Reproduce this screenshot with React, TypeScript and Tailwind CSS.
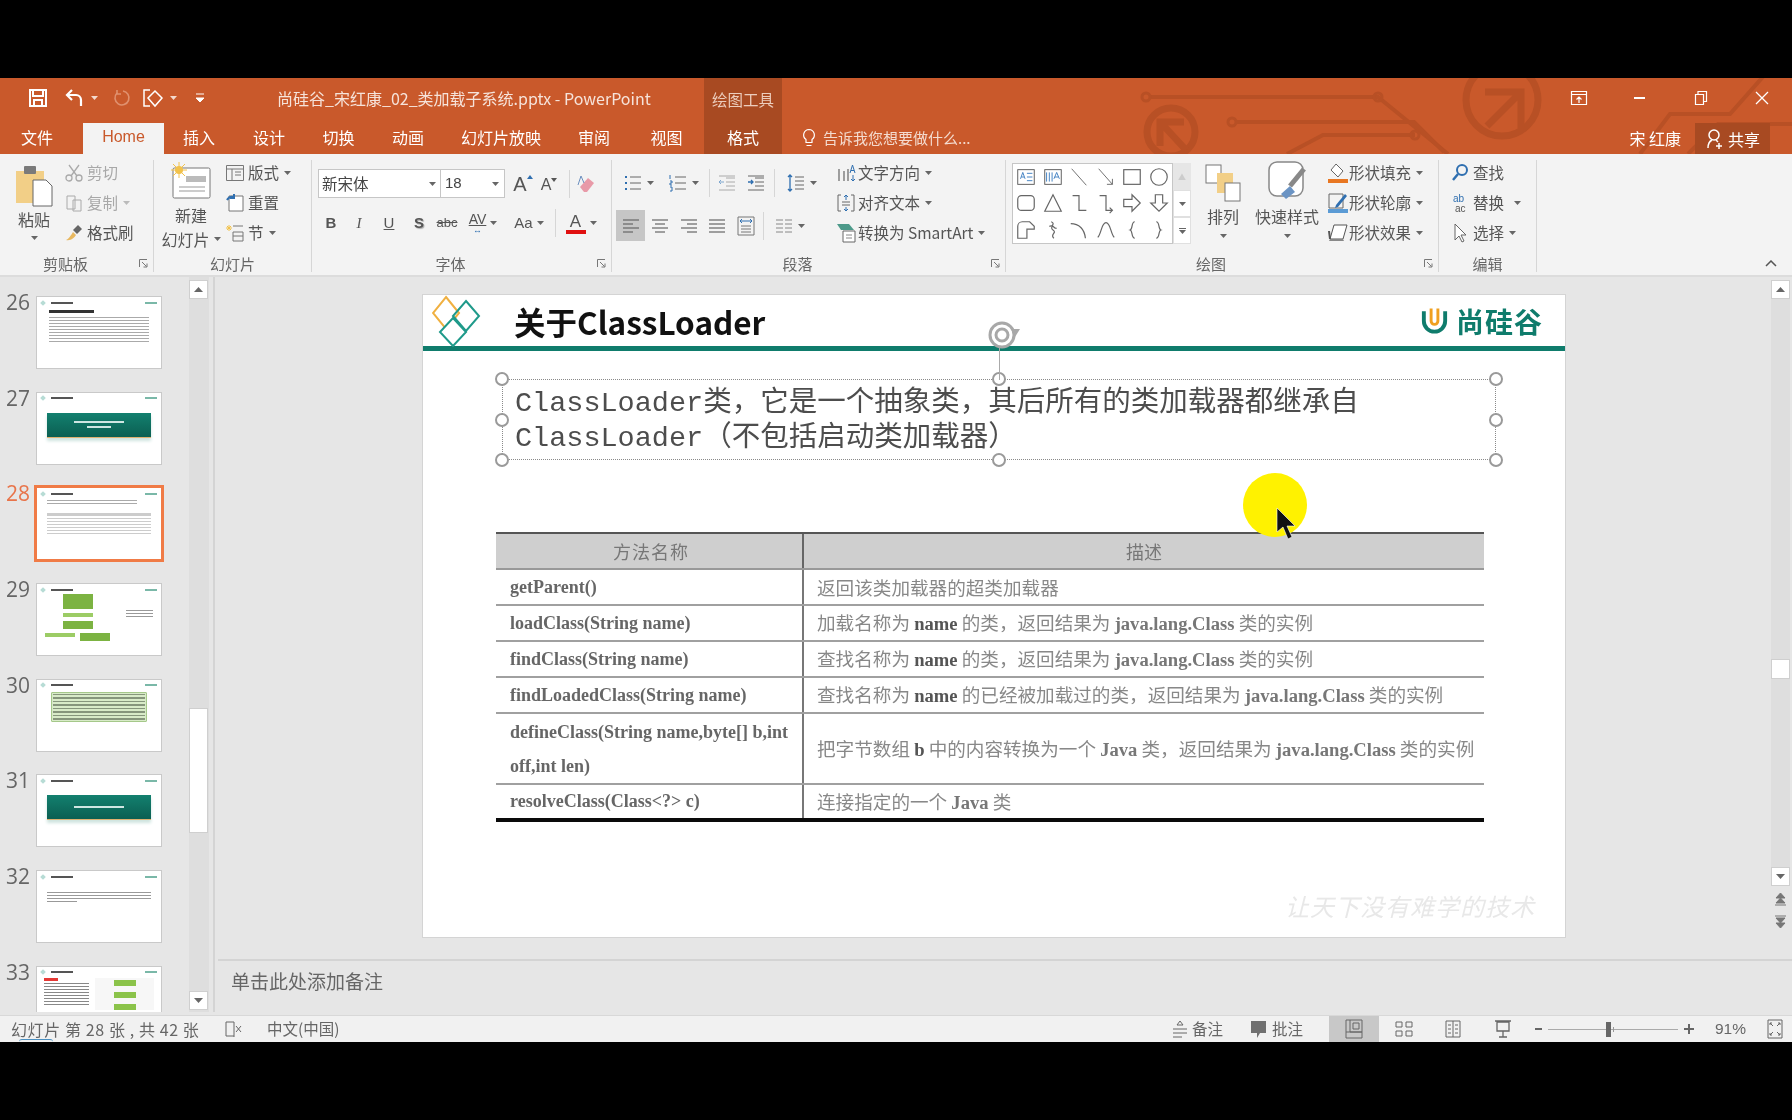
import React from "react";

const cjk = "font-['Noto_Sans_CJK_SC','Liberation_Sans',sans-serif]";

function Caret({ color = "#666" }: { color?: string }) {
  return (
    <svg width="7" height="4" viewBox="0 0 7 4" className="shrink-0">
      <path d="M0 0h7L3.5 4z" fill={color} />
    </svg>
  );
}

function Ico({ w = 20, h = 20, vb = "0 0 20 20", children }: { w?: number; h?: number; vb?: string; children: React.ReactNode }) {
  return (
    <svg width={w} height={h} viewBox={vb} fill="none" className="shrink-0">
      {children}
    </svg>
  );
}

// one row of the small ribbon buttons
function SmallBtn({
  icon,
  label,
  caret,
  gray,
  gap = 4,
}: {
  icon: React.ReactNode;
  label: string;
  caret?: boolean;
  gray?: boolean;
  gap?: number;
}) {
  return (
    <div className="flex h-[26px] items-center">
      <div className="flex w-[22px] justify-center">{icon}</div>
      <span
        className={`text-[15.5px] leading-none whitespace-nowrap ${gray ? "text-[#a8a8a8]" : "text-[#555]"}`}
        style={{ marginLeft: gap - 2 }}
      >
        {label}
      </span>
      {caret && (
        <span className="ml-[5px]">
          <Caret color={gray ? "#bbb" : "#666"} />
        </span>
      )}
    </div>
  );
}

function Launcher() {
  return (
    <svg width="9" height="9" viewBox="0 0 9 9" className="shrink-0">
      <path d="M.5 8V.5H8M3 3l4.5 4.5M8 4.5V8H4.5" stroke="#777" fill="none" />
    </svg>
  );
}

function Group({
  w,
  label,
  launcher,
  children,
}: {
  w: number;
  label: string;
  launcher?: boolean;
  children: React.ReactNode;
}) {
  return (
    <div className="flex h-[112px] shrink-0 flex-col border-r border-[#d6d6d6]" style={{ width: w }}>
      <div className="flex h-[86px]">{children}</div>
      <div className={`flex h-[26px] items-center pt-[8px] pr-[5px] ${launcher ? "" : "pl-[14px]"}`}>
        <span className={`flex-1 text-center text-[15px] leading-none text-[#666] ${launcher ? "mr-[8px]" : ""}`}>{label}</span>
        {launcher ? <Launcher /> : <span className="w-[9px]" />}
      </div>
    </div>
  );
}

function TextBtn({ w, children, caret }: { w: number; children: React.ReactNode; caret?: boolean }) {
  return (
    <div className="flex h-[30px] items-center justify-center gap-[4px]" style={{ width: w }}>
      {children}
      {caret && <Caret />}
    </div>
  );
}

const VDiv = () => <div className="mx-[3px] h-[28px] w-px bg-[#d6d6d6]" />;

function AlignIcon({ kind }: { kind: "l" | "c" | "r" | "j" }) {
  const rows =
    kind === "l"
      ? ["M2 4h16", "M2 8h10", "M2 12h16", "M2 16h10"]
      : kind === "c"
      ? ["M2 4h16", "M5 8h10", "M2 12h16", "M5 16h10"]
      : kind === "r"
      ? ["M2 4h16", "M8 8h10", "M2 12h16", "M8 16h10"]
      : ["M2 4h16", "M2 8h16", "M2 12h16", "M2 16h16"];
  return (
    <Ico>
      {rows.map((d) => (
        <path key={d} d={d} stroke="#666" strokeWidth="1.2" />
      ))}
    </Ico>
  );
}

const shapes: React.ReactNode[] = [
  <>
    <rect x="3" y="4" width="18" height="16" stroke="#555" />
    <path d="M6 14l2.5-7 2.5 7M7 12h3M13 8h6M13 12h6M13 16h6" stroke="#3a7cc0" />
  </>,
  <>
    <rect x="3" y="4" width="18" height="16" stroke="#555" />
    <path d="M5 7v10M8 7v10M11 7v10M13 14l3-7 3 7M14 12h4" stroke="#3a7cc0" />
  </>,
  <path d="M4 3l16 18" stroke="#666" />,
  <path d="M4 3l15 17M19 14v6h-6" stroke="#666" />,
  <rect x="3" y="4" width="18" height="16" stroke="#666" strokeWidth="1.3" />,
  <ellipse cx="12" cy="12" rx="9" ry="9" stroke="#666" strokeWidth="1.3" />,
  <rect x="3" y="4" width="18" height="16" rx="4" stroke="#666" strokeWidth="1.3" />,
  <path d="M12 3L3 21h18z" stroke="#666" strokeWidth="1.3" />,
  <path d="M5 4h7v16h8" stroke="#666" strokeWidth="1.3" />,
  <path d="M5 4h7v16h6M16 17l3 3-3 3" stroke="#666" strokeWidth="1.3" />,
  <path d="M3 8h9V3l9 9-9 9v-5H3z" stroke="#666" strokeWidth="1.3" />,
  <path d="M8 3h8v9h5l-9 9-9-9h5z" stroke="#666" strokeWidth="1.3" />,
  <path d="M3 21V8a5 5 0 015-5h8l5 5v3h-8v10z" stroke="#666" strokeWidth="1.3" />,
  <path d="M10 3c6 2-3 6 2 9 5 3-4 5 1 9M8 8c5-2 5 3 8 2" stroke="#666" strokeWidth="1.3" />,
  <path d="M3 5c9 0 15 6 16 16" stroke="#666" strokeWidth="1.3" />,
  <path d="M3 20C7 16 7 4 12 4s5 12 9 16" stroke="#666" strokeWidth="1.3" />,
  <path d="M15 3c-4 0-2 8-5 9 3 1 1 9 5 9" stroke="#666" strokeWidth="1.3" />,
  <path d="M9 3c4 0 2 8 5 9-3 1-1 9-5 9" stroke="#666" strokeWidth="1.3" />,
];

function TitleBar() {
  return (
    <div className="relative h-[76px] shrink-0 bg-[#c9592b] text-white">
      <svg className="absolute inset-0" width="1792" height="76" viewBox="0 78 1792 76" fill="none" stroke="#b85025" strokeWidth="5">
        <path d="M1150 97h228l70 57" strokeWidth="4" />
        <circle cx="1146" cy="97" r="4" strokeWidth="3" />
        <circle cx="1378" cy="97" r="4" strokeWidth="3" />
        <circle cx="1232" cy="122" r="4" strokeWidth="3" />
        <path d="M1236 122h178l30 30M1415 135h-92l-36 19" strokeWidth="4" />
        <circle cx="1415" cy="135" r="4" strokeWidth="3" />
        <circle cx="1171" cy="132" r="24" strokeWidth="7" />
        <path d="M1160 146v-24h24M1162 124l24 26" strokeWidth="7" />
        <circle cx="1502" cy="100" r="36" strokeWidth="7" />
        <path d="M1485 92h36v36M1519 94l-32 32" strokeWidth="7" />
        <path d="M1640 154l30-40h60l62-70M1688 154l30-30h74" strokeWidth="4" />
      </svg>

      <div className="relative flex h-[45px]">
        <div className="flex w-[277px] items-center pb-[6px]">
          <div className="ml-[27px] w-[22px]">
            <Ico w={22} h={22} vb="0 0 22 22">
              <path d="M3 3h16v16H3z M6 3v6h10V3 M7 19v-6h8v6" stroke="#fff" strokeWidth="2" />
            </Ico>
          </div>
          <div className="ml-[15px] flex items-center gap-[5px]">
            <Ico w={22} h={22} vb="0 0 22 22">
              <path d="M8 3L3 8l5 5M3 8h9a5 5 0 015 5v6" stroke="#fff" strokeWidth="2.2" />
            </Ico>
            <Caret color="#f4d9cc" />
          </div>
          <div className="ml-[13px]">
            <Ico w={20} h={20}>
              <path d="M12 3a7 7 0 11-6 2M6 2v4h4" stroke="#e0916f" strokeWidth="1.6" />
            </Ico>
          </div>
          <div className="ml-[10px] flex items-center gap-[5px]">
            <Ico w={24} h={22} vb="0 0 24 22">
              <path d="M9 3H3v16h6M14 4l7 7-7 8-7-8z" stroke="#fff" strokeWidth="1.5" />
            </Ico>
            <Caret color="#f4d9cc" />
          </div>
          <div className="ml-[19px]">
            <Ico w={8} h={10} vb="0 0 8 10">
              <path d="M0 1h8M0 5h8l-4 4z" stroke="#fff" fill="#fff" />
            </Ico>
          </div>
        </div>
        <div className="w-[427px] pt-[11px] text-[16px] leading-[18px] whitespace-nowrap text-[#f6e3da]">
          尚硅谷_宋红康_02_类加载子系统.pptx - PowerPoint
        </div>
        <div className="flex w-[78px] justify-center bg-[#a84a22] pt-[12px] text-[15.5px] leading-[18px] text-[#eccdbd]">绘图工具</div>
        <div className="flex-1" />
        <div className="flex w-[244px] pb-[6px]">
          <div className="flex w-[61px] items-center justify-center">
            <Ico w={18} h={18} vb="0 0 18 18">
              <path d="M1.5 2.5h15v13h-15zM1.5 5.5h15M9 14V8M6.5 10.5L9 8l2.5 2.5" stroke="#fff" strokeWidth="1.2" />
            </Ico>
          </div>
          <div className="flex w-[61px] items-center justify-center">
            <div className="h-[2px] w-[11px] bg-white" />
          </div>
          <div className="flex w-[61px] items-center justify-center">
            <Ico w={14} h={16} vb="0 0 14 16">
              <path d="M1.5 4.5h8v10h-8zM4 4.5V1.5h8.5v10h-3" stroke="#fff" strokeWidth="1.2" />
            </Ico>
          </div>
          <div className="flex w-[61px] items-center justify-center">
            <Ico w={14} h={14} vb="0 0 14 14">
              <path d="M1 1l12 12M13 1L1 13" stroke="#fff" strokeWidth="1.3" />
            </Ico>
          </div>
        </div>
      </div>

      <div className="relative flex h-[31px] text-[16px] leading-none">
        <div className="flex w-[83px] items-center justify-center pr-[9px] pb-[3px]">文件</div>
        <div className={"flex w-[81px] items-center justify-center bg-[#f3f3f3] pb-[3px] font-['Liberation_Sans',sans-serif] text-[#c9592b]"}>Home</div>
        {[
          ["插入", 70],
          ["设计", 70],
          ["切换", 69],
          ["动画", 70],
          ["幻灯片放映", 116],
          ["审阅", 70],
          ["视图", 75],
        ].map(([t, w]) => (
          <div key={t as string} className="flex items-center justify-center pb-[3px]" style={{ width: w as number }}>
            {t}
          </div>
        ))}
        <div className="flex w-[78px] items-center justify-center bg-[#a84a22] pb-[3px]">格式</div>
        <div className="ml-[19px] flex items-center gap-[6px] pb-[2px] text-[15px] text-[#f4dbcf]">
          <Ico w={16} h={20} vb="0 0 16 20">
            <path d="M8 1.5a5.5 5.5 0 00-3 10v3h6v-3a5.5 5.5 0 00-3-10zM5.5 17.5h5" stroke="#fff" strokeWidth="1.2" />
          </Ico>
          告诉我您想要做什么...
        </div>
        <div className="flex-1" />
        <div className="flex items-center pr-[14px] pb-[2px]">宋 红康</div>
        <div className="mr-[22px] flex w-[75px] items-center justify-center gap-[3px] bg-[#a84a22]">
          <Ico w={20} h={22} vb="0 0 20 22">
            <circle cx="9" cy="7" r="5" stroke="#fff" strokeWidth="1.5" />
            <path d="M3 20c0-5 2-7 4-8M11 12l2 2M14 15v6M11 18h6" stroke="#fff" strokeWidth="1.5" />
          </Ico>
          共享
        </div>
      </div>
    </div>
  );
}

function GrowFont({ size, down }: { size: number; down?: boolean }) {
  return (
    <div className="flex items-start font-['Liberation_Sans',sans-serif] leading-none text-[#555]" style={{ fontSize: size }}>
      A
      <svg width="6" height="4" viewBox="0 0 6 4" className="mt-[1px]">
        <path d={down ? "M0 0h6L3 4z" : "M0 4h6L3 0z"} fill={down ? "#555" : "#2f6fb0"} />
      </svg>
    </div>
  );
}

function Ribbon() {
  return (
    <div className="relative flex h-[123px] shrink-0 border-b-2 border-[#dcdcdc] bg-[#f3f3f3] pt-[6px]">
      <Group w={154} label="剪贴板" launcher>
        <div className="ml-[11px] flex w-[46px] flex-col items-center pt-[5px]">
          <Ico w={38} h={42} vb="0 0 38 42">
            <path d="M1 6h28v32H1z" fill="#f2cf87" />
            <rect x="9" y="1" width="12" height="8" rx="1" fill="#7a7a7a" />
            <path d="M18 15h13l6 6v20H18z" fill="#fff" stroke="#666" />
          </Ico>
          <span className="mt-[2px] text-[16px] leading-[20px] text-[#555]">粘贴</span>
          <span className="mt-[7px]">
            <Caret />
          </span>
        </div>
        <div className="ml-[6px] flex flex-col gap-[4px]">
          <SmallBtn
            gray
            label="剪切"
            icon={
              <Ico>
                <path d="M5 2l8 11M15 2L7 13" stroke="#aaa" strokeWidth="1.3" />
                <circle cx="5" cy="15" r="3" stroke="#aaa" strokeWidth="1.3" />
                <circle cx="15" cy="15" r="3" stroke="#aaa" strokeWidth="1.3" />
              </Ico>
            }
          />
          <SmallBtn
            gray
            caret
            label="复制"
            icon={
              <Ico>
                <path d="M3 3h8v13H3zM9 7h8v11H9z" stroke="#aaa" fill="#f3f3f3" />
              </Ico>
            }
          />
          <SmallBtn
            label="格式刷"
            icon={
              <Ico>
                <path d="M9 7l5-5 4 4-5 5z" fill="#666" />
                <path d="M2 17c3-1 5-5 7-8l3 3c-2 3-5 6-10 5z" fill="#e8b860" />
              </Ico>
            }
          />
        </div>
      </Group>

      <Group w={158} label="幻灯片">
        <div className="ml-[7px] flex w-[60px] flex-col items-center pt-[2px]">
          <Ico w={42} h={38} vb="0 0 42 38">
            <rect x="3" y="6" width="37" height="30" rx="1.5" fill="#fff" stroke="#777" />
            <path d="M16 14h20v6H16z" fill="#bbb" />
            <path d="M9 25h26M9 29h26" stroke="#999" />
            <circle cx="9" cy="8" r="4" fill="#f2c24b" />
            <path d="M9 0v16M1 8h16M3 2l12 12M15 2L3 14" stroke="#f2c24b" />
          </Ico>
          <span className="mt-[3px] text-[16px] leading-[24px] text-[#555]">新建</span>
          <div className="flex items-center gap-[4px] text-[16px] leading-[24px] whitespace-nowrap text-[#555]">
            幻灯片
            <Caret />
          </div>
        </div>
        <div className="ml-[3px] flex flex-col gap-[4px]">
          <SmallBtn
            caret
            label="版式"
            icon={
              <Ico>
                <path d="M1.5 2.5h17v15h-17zM1.5 6h17M7 6v11.5M10 9h6M10 12h6" stroke="#777" />
              </Ico>
            }
          />
          <SmallBtn
            label="重置"
            icon={
              <Ico>
                <path d="M4 3h14v15H4z" stroke="#777" fill="#fff" />
                <path d="M2 7a6 6 0 017-3M9 1v4H5" stroke="#2f6fb0" strokeWidth="2" />
              </Ico>
            }
          />
          <SmallBtn
            caret
            label="节"
            icon={
              <Ico>
                <path d="M8 3h10M8 9h10v9H8zM8 13h10" stroke="#777" />
                <path d="M1 5h6M4 2v6M2 3l4 4M6 3L2 7" stroke="#f2c24b" />
              </Ico>
            }
          />
        </div>
      </Group>

      <Group w={300} label="字体" launcher>
        <div className="ml-[6px] flex flex-col pt-[9px]">
          <div className="flex h-[29px] items-center">
            <div className="flex h-[29px] w-[123px] items-center justify-between border border-[#c6c6c6] bg-white pr-[4px] pl-[3px] text-[15.5px] text-[#444]">
              新宋体
              <Caret />
            </div>
            <div className="-ml-px flex h-[29px] w-[65px] items-center justify-between border border-[#c6c6c6] bg-white pr-[5px] pl-[4px] font-['Liberation_Sans',sans-serif] text-[15px] text-[#444]">
              18
              <Caret />
            </div>
            <div className="flex w-[30px] justify-center pl-[6px]">
              <GrowFont size={20} />
            </div>
            <div className="flex w-[28px] justify-center pt-[3px]">
              <GrowFont size={16} down />
            </div>
            <div className="mx-[6px] h-[28px] w-px bg-[#d6d6d6]" />
            <Ico w={22} h={22} vb="0 0 22 22">
              <path d="M4 14l8-9 6 5-7 9H8z" fill="#e89aa8" />
              <path d="M5 3l-3 9M5 3l3 7" stroke="#6b8fbf" />
            </Ico>
          </div>
          <div className="mt-[10px] flex h-[30px] items-center text-[15px] text-[#555]">
            <TextBtn w={26}>
              <b className="font-['Liberation_Sans',sans-serif]">B</b>
            </TextBtn>
            <TextBtn w={30}>
              <i className="font-['Liberation_Serif',serif]">I</i>
            </TextBtn>
            <TextBtn w={30}>
              <u className="font-['Liberation_Sans',sans-serif]">U</u>
            </TextBtn>
            <TextBtn w={30}>
              <b className="font-['Liberation_Sans',sans-serif] [text-shadow:1px_1px_1px_#aaa]">S</b>
            </TextBtn>
            <TextBtn w={26}>
              <span className="font-['Liberation_Sans',sans-serif] text-[13px] line-through">abc</span>
            </TextBtn>
            <TextBtn w={46} caret>
              <span className="flex flex-col items-center font-['Liberation_Sans',sans-serif] text-[14px] leading-[13px]">
                <span className="underline">AV</span>
                <span className="text-[9px] leading-[8px] text-[#2f6fb0]">↔</span>
              </span>
            </TextBtn>
            <TextBtn w={46} caret>
              <span className="font-['Liberation_Sans',sans-serif]">Aa</span>
            </TextBtn>
            <VDiv />
            <TextBtn w={44} caret>
              <span className="flex flex-col items-center font-['Liberation_Sans',sans-serif] text-[17px] leading-[17px]">
                A<span className="h-[4px] w-[20px] bg-[#e01010]" />
              </span>
            </TextBtn>
          </div>
        </div>
      </Group>

      <Group w={394} label="段落" launcher>
        <div className="flex w-[218px] flex-col pt-[8px] pl-[4px]">
          <div className="flex h-[30px] items-center">
            <TextBtn w={44} caret>
              <Ico>
                <path d="M7 4h11M7 10h11M7 16h11" stroke="#666" />
                <path d="M2 4h2M2 10h2M2 16h2" stroke="#2f6fb0" strokeWidth="2" />
              </Ico>
            </TextBtn>
            <TextBtn w={46} caret>
              <Ico>
                <path d="M7 4h11M7 10h11M7 16h11" stroke="#666" />
                <path d="M2 2v4M2 8h2v2H2v2h2M2 14h2v4H2" stroke="#2f6fb0" />
              </Ico>
            </TextBtn>
            <VDiv />
            <div className="flex w-[28px] justify-center">
              <Ico>
                <path d="M9 5h9M9 9h9M9 13h9M2 17h16M2 3h16" stroke="#aaa" />
                <path d="M7 9H2M4 7L2 9l2 2" stroke="#7fa8d0" />
              </Ico>
            </div>
            <div className="flex w-[30px] justify-center">
              <Ico>
                <path d="M9 5h9M9 9h9M9 13h9M2 17h16M2 3h16" stroke="#666" />
                <path d="M2 9h5M5 7l2 2-2 2" stroke="#2f6fb0" strokeWidth="1.3" />
              </Ico>
            </div>
            <VDiv />
            <TextBtn w={46} caret>
              <Ico>
                <path d="M9 4h9M9 8h9M9 12h9M9 16h9" stroke="#666" />
                <path d="M4 2v16M2 4l2-2 2 2M2 16l2 2 2-2" stroke="#2f6fb0" strokeWidth="1.3" />
              </Ico>
            </TextBtn>
          </div>
          <div className="mt-[12px] flex h-[31px] items-center">
            <div className="flex h-[31px] w-[29px] items-center justify-center bg-[#c6c6c6]">
              <AlignIcon kind="l" />
            </div>
            <div className="flex w-[29px] justify-center">
              <AlignIcon kind="c" />
            </div>
            <div className="flex w-[29px] justify-center">
              <AlignIcon kind="r" />
            </div>
            <div className="flex w-[28px] justify-center">
              <AlignIcon kind="j" />
            </div>
            <div className="flex w-[29px] justify-center">
              <Ico>
                <path d="M2 1h16v18H2z" stroke="#777" />
                <path d="M4 5h12M6 3L4 5l2 2M14 3l2 2-2 2" stroke="#2f6fb0" />
                <path d="M5 10h10M5 13h10M5 16h10" stroke="#777" />
              </Ico>
            </div>
            <VDiv />
            <TextBtn w={44} caret>
              <Ico>
                <path d="M2 4h7M11 4h7M2 8h7M11 8h7M2 12h7M11 12h7M2 16h7M11 16h7" stroke="#888" />
              </Ico>
            </TextBtn>
          </div>
        </div>
        <div className="ml-[5px] flex flex-col gap-[4px]">
          <SmallBtn
            caret
            label="文字方向"
            gap={3}
            icon={
              <Ico>
                <path d="M3 6v12M8 8v10M12 6v12" stroke="#666" strokeWidth="1.2" />
                <path d="M14 10l2.5-8 2.5 8M15 7.5h3M17 12v6M15 16l2 2 2-2" stroke="#2f6fb0" />
              </Ico>
            }
          />
          <SmallBtn
            caret
            label="对齐文本"
            gap={3}
            icon={
              <Ico>
                <path d="M5 2H2v16h3M15 2h3v16h-3M6 9h8M6 12h8" stroke="#666" />
                <path d="M10 2v5M8 4l2-2 2 2M10 18v-4M8 16l2 2 2-2" stroke="#2f6fb0" />
              </Ico>
            }
          />
          <SmallBtn
            caret
            label="转换为 SmartArt"
            gap={3}
            icon={
              <Ico>
                <path d="M1 1h12l5 6H5z" fill="#4d9a8a" />
                <path d="M7 8h12v11H7z" fill="#fff" stroke="#666" />
                <path d="M10 12h6M10 15h6" stroke="#888" />
              </Ico>
            }
          />
        </div>
      </Group>

      <Group w={433} label="绘图" launcher>
        <div className="mt-[3px] ml-[6px] flex h-[81px] shrink-0">
          <div className="grid w-[161px] grid-cols-6 border border-[#c6c6c6] bg-white">
            {shapes.map((s, i) => (
              <div key={i} className="flex items-center justify-center">
                <svg width="22" height="22" viewBox="0 0 24 24" fill="none">
                  {s}
                </svg>
              </div>
            ))}
          </div>
          <div className="flex w-[18px] flex-col">
            <div className="flex h-[27px] items-center justify-center bg-[#e6e6e6] text-[8px] text-[#ccc]">▲</div>
            <div className="flex h-[27px] items-center justify-center border border-[#e0e0e0] bg-white">
              <Caret />
            </div>
            <div className="flex h-[27px] flex-col items-center justify-center gap-[1px] border border-[#e0e0e0] bg-white">
              <div className="h-px w-[7px] bg-[#666]" />
              <Caret />
            </div>
          </div>
        </div>
        <div className="ml-[7px] flex w-[50px] flex-col items-center pt-[4px] text-[16px] leading-[20px] text-[#555]">
          <Ico w={36} h={38} vb="0 0 36 38">
            <rect x="1" y="1" width="15" height="18" fill="#fff" stroke="#777" />
            <rect x="12" y="9" width="16" height="20" fill="#f2cf87" />
            <rect x="20" y="19" width="15" height="18" fill="#fff" stroke="#777" />
          </Ico>
          <span className="mt-[4px]">排列</span>
          <span className="mt-[8px]">
            <Caret />
          </span>
        </div>
        <div className="ml-[1px] flex w-[76px] flex-col items-center pt-[1px] text-[16px] leading-[20px] text-[#555]">
          <Ico w={38} h={41} vb="0 0 38 41">
            <rect x="1" y="1" width="34" height="34" rx="8" fill="#fff" stroke="#888" strokeWidth="1.5" />
            <path d="M36 8L22 25" stroke="#888" strokeWidth="5" />
            <path d="M22 25l-9 8 5 5 9-7z" fill="#6b94c4" />
          </Ico>
          <span className="mt-[4px] whitespace-nowrap">快速样式</span>
          <span className="mt-[8px]">
            <Caret />
          </span>
        </div>
        <div className="ml-[2px] flex flex-col gap-[4px]">
          <SmallBtn
            caret
            label="形状填充"
            gap={2}
            icon={
              <Ico w={22} h={22} vb="0 0 22 22">
                <path d="M9 2l7 7-5 6-7-7z" fill="#fff" stroke="#666" />
                <path d="M1 17h20v4H1z" fill="#e87722" />
              </Ico>
            }
          />
          <SmallBtn
            caret
            label="形状轮廓"
            gap={2}
            icon={
              <Ico w={22} h={22} vb="0 0 22 22">
                <path d="M2 2h14v14H2z" stroke="#666" />
                <path d="M18 2L9 13l-1 3 3-1L20 4z" fill="#2f6fb0" />
                <path d="M1 17h20v4H1z" fill="#5b9bd5" />
              </Ico>
            }
          />
          <SmallBtn
            caret
            label="形状效果"
            gap={2}
            icon={
              <Ico w={22} h={22} vb="0 0 22 22">
                <path d="M7 3h13L16 17H3z" fill="#fff" stroke="#555" />
                <path d="M3 17h13l1 2H2z" fill="#888" />
                <path d="M2 9l1 8" stroke="#555" strokeWidth="2" />
              </Ico>
            }
          />
        </div>
      </Group>

      <Group w={98} label="编辑">
        <div className="ml-[10px] flex flex-col gap-[4px]">
          <SmallBtn
            label="查找"
            icon={
              <Ico>
                <circle cx="12" cy="7" r="5" stroke="#2f6fb0" strokeWidth="2" />
                <path d="M8 11l-5 6" stroke="#2f6fb0" strokeWidth="2.5" />
              </Ico>
            }
          />
          <div className="flex items-center gap-[10px]">
            <SmallBtn
              label="替换"
              icon={
                <Ico>
                  <text x="3" y="9" fontSize="10" fill="#2f6fb0" fontFamily="Liberation Sans">ab</text>
                  <text x="5" y="19" fontSize="10" fill="#555" fontFamily="Liberation Sans">ac</text>
                </Ico>
              }
            />
            <Caret />
          </div>
          <SmallBtn
            caret
            label="选择"
            icon={
              <Ico>
                <path d="M5 1v16l4-4 3 6 2-1-3-6h5z" stroke="#666" fill="#fff" />
              </Ico>
            }
          />
        </div>
      </Group>

      <div className="flex flex-1 items-end justify-end pr-[15px] pb-[8px]">
        <svg width="12" height="7" viewBox="0 0 12 7">
          <path d="M1 6l5-5 5 5" stroke="#555" strokeWidth="1.5" fill="none" />
        </svg>
      </div>
    </div>
  );
}

function Lines({ rows, color = "#666", w = "w-full", h = "h-[2px]" }: { rows: number; color?: string; w?: string; h?: string }) {
  return (
    <div className="flex flex-col gap-[2px]">
      {Array.from({ length: rows }).map((_, i) => (
        <div key={i} className={`${w} ${h}`} style={{ background: color }} />
      ))}
    </div>
  );
}

const ChapterThumb = ({ two }: { two?: boolean }) => (
  <div className="mx-[10px] mt-[11px] flex h-[25px] flex-col items-center justify-center gap-[3px] border-b border-[#e0b070] bg-gradient-to-b from-[#13806f] to-[#0b5f52] shadow-[0_3px_3px_#cfe4df]">
    <div className="h-[2px] w-[50px] bg-[#cfe6e2]" />
    {two && <div className="h-[2px] w-[24px] bg-[#cfe6e2]" />}
  </div>
);

function thumbBody(n: number) {
  if (n === 26)
    return (
      <div className="px-[12px] pt-[4px]">
        <div className="mb-[4px] h-[3px] w-[45px] bg-[#333]" />
        <Lines rows={9} color="#aaa" h="h-px" />
      </div>
    );
  if (n === 27) return <ChapterThumb two />;
  if (n === 31) return <ChapterThumb />;
  if (n === 28)
    return (
      <div className="px-[10px] pt-[3px]">
        <Lines rows={2} color="#aaa" h="h-px" w="w-[90px]" />
        <div className="mt-[9px] h-[3px] bg-[#ccc]" />
        <div className="mt-[2px]">
          <Lines rows={6} color="#ccc" h="h-px" />
        </div>
      </div>
    );
  if (n === 29)
    return (
      <div className="flex gap-[6px] px-[8px] pt-[1px]">
        <div className="flex w-[70px] flex-col items-center gap-[4px]">
          <div className="h-[15px] w-[30px] bg-[#7cb342]" />
          <div className="h-[4px] w-[30px] bg-[#9ccc65]" />
          <div className="h-[8px] w-[30px] bg-[#7cb342]" />
          <div className="flex gap-[5px]">
            <div className="h-[4px] w-[30px] bg-[#9ccc65]" />
            <div className="h-[8px] w-[30px] bg-[#7cb342]" />
          </div>
        </div>
        <div className="mt-[16px] ml-[10px] w-[30px]">
          <Lines rows={3} color="#999" h="h-px" />
        </div>
      </div>
    );
  if (n === 30)
    return (
      <div className="mx-[14px] mt-[3px] flex flex-col gap-[2px] rounded-[1px] border border-[#a5c88a] bg-[#d8ebc8] p-[1px]">
        <Lines rows={8} color="#86967c" h="h-[1.5px]" />
      </div>
    );
  if (n === 32)
    return (
      <div className="px-[10px] pt-[12px]">
        <Lines rows={3} color="#999" h="h-px" />
        <div className="mt-[2px] h-px w-[30px] bg-[#999]" />
      </div>
    );
  return (
    <div className="flex gap-[6px] px-[7px] pt-[2px]">
      <div className="w-[45px]">
        <div className="mb-[2px] h-[3px] w-[14px] bg-[#e53935]" />
        <Lines rows={8} color="#888" h="h-px" />
      </div>
      <div className="flex flex-1 flex-col items-center gap-[6px] bg-[#f7f7f7] pt-[2px]">
        <div className="h-[6px] w-[22px] bg-[#8bc34a]" />
        <div className="h-[6px] w-[22px] bg-[#8bc34a]" />
        <div className="h-[6px] w-[22px] bg-[#8bc34a]" />
      </div>
    </div>
  );
}

function Thumb({ n, active }: { n: number; active?: boolean }) {
  return (
    <div className="flex h-[71px] shrink-0">
      <div className={`w-[37px] pl-[6px] font-['Open_Sans','Liberation_Sans',sans-serif] text-[21px] leading-[10px] ${active ? "text-[#e8744a]" : "text-[#666]"}`}>
        {n}
      </div>
      <div className={`relative h-[71px] w-[124px] shrink-0 bg-white outline-solid ${active ? "outline-[3px] outline-offset-0 outline-[#f07b46]" : "outline-1 outline-[#c9c9c9]"}`}>
        <div className="flex h-[9px] items-center justify-between px-[4px] pt-[2px]">
          <div className="flex items-center gap-[6px]">
            <div className="h-[4px] w-[4px] rotate-45 bg-[#b7dcd5]" />
            <div className="h-[2px] w-[22px] bg-[#555]" />
          </div>
          <div className="h-[2px] w-[12px] bg-[#7ab8a8]" />
        </div>
        {thumbBody(n)}
      </div>
    </div>
  );
}

function ScrollBtn({ up }: { up?: boolean }) {
  return (
    <div className="flex h-[19px] w-[19px] items-center justify-center border border-[#cfcfcf] bg-white">
      <svg width="9" height="5" viewBox="0 0 9 5">
        <path d={up ? "M0 5h9L4.5 0z" : "M0 0h9L4.5 5z"} fill="#666" />
      </svg>
    </div>
  );
}

function ThumbPane() {
  return (
    <div className="flex h-[735px] w-[215px] shrink-0 overflow-hidden border-r-2 border-[#d4d4d4]">
      <div className="flex w-[189px] shrink-0 flex-col gap-[24.7px] pt-[20px]">
        {[26, 27, 28, 29, 30, 31, 32, 33].map((n) => (
          <Thumb key={n} n={n} active={n === 28} />
        ))}
      </div>
      <div className="flex h-[735px] w-[20px] shrink-0 flex-col bg-[#dedede] pt-[3px]">
        <ScrollBtn up />
        <div className="mt-[409px] h-[125px] w-[19px] border border-[#cfcfcf] bg-white" />
        <div className="mt-[158px]">
          <ScrollBtn />
        </div>
      </div>
    </div>
  );
}

function Handle({ className }: { className: string }) {
  return <div className={`absolute h-[14px] w-[14px] rounded-full border-2 border-[#9a9a9a] bg-white ${className}`} />;
}

const Lat = ({ children }: { children: React.ReactNode }) => (
  <span className="font-['Liberation_Serif',serif] font-semibold text-[#777]">{children}</span>
);
const Key = ({ children }: { children: React.ReactNode }) => (
  <b className="font-['Liberation_Serif',serif] text-[#555]">{children}</b>
);

const tableRows: [string, React.ReactNode][] = [
  ["getParent()", "返回该类加载器的超类加载器"],
  ["loadClass(String name)", <>加载名称为 <Key>name</Key> 的类，返回结果为 <Lat>java.lang.Class</Lat> 类的实例</>],
  ["findClass(String name)", <>查找名称为 <Key>name</Key> 的类，返回结果为 <Lat>java.lang.Class</Lat> 类的实例</>],
  ["findLoadedClass(String name)", <>查找名称为 <Key>name</Key> 的已经被加载过的类，返回结果为 <Lat>java.lang.Class</Lat> 类的实例</>],
];

function Slide() {
  return (
    <div className="relative ml-[208px] flex h-[642px] w-[1142px] shrink-0 flex-col bg-white shadow-[0_0_0_1px_#d4d4d4]">
      <div className="flex h-[56px] shrink-0 items-center justify-between border-b-[5px] border-[#0f7c6c] pr-[22px] pl-[9px]">
        <div className="flex items-center">
          <svg width="50" height="52" viewBox="0 0 50 52" fill="none" strokeWidth="2">
            <path d="M14 2l13 16-13 16L1 18z" stroke="#f0b040" />
            <path d="M34 6l13 15-13 15-13-15z" stroke="#1f9a8a" />
            <path d="M21 23l13 14-13 14L8 37z" stroke="#1f9a8a" fill="#fff" />
          </svg>
          <span className="mt-[2px] ml-[32px] text-[31.5px] leading-none font-bold text-[#111]">关于ClassLoader</span>
        </div>
        <div className="flex items-center gap-[6px]">
          <svg width="31" height="32" viewBox="0 0 32 32" fill="none">
            <path d="M3 6v10a13 13 0 0026 0V6h-4v10a9 9 0 01-18 0V6z" fill="#0f7c6c" />
            <path d="M11 3v13a5 5 0 0010 0V3h-3v13a2 2 0 01-4 0V3z" fill="#f0a020" />
          </svg>
          <span className="text-[28px] leading-none font-bold tracking-[1px] text-[#0f7c6c]">尚硅谷</span>
        </div>
      </div>

      <div className="relative mt-[28px] ml-[79px] h-[81px] w-[994px] shrink-0 border border-dotted border-[#8a8a8a] pt-[6px] pl-[12px] font-['Liberation_Mono','Noto_Sans_CJK_SC',monospace] text-[28.5px] leading-[35px] text-[#4d4d4d]">
        <div className="whitespace-nowrap">ClassLoader类，它是一个抽象类，其后所有的类加载器都继承自</div>
        <div className="whitespace-nowrap">ClassLoader（不包括启动类加载器）</div>
        <Handle className="-top-[8px] -left-[8px]" />
        <Handle className="-top-[8px] left-[489px]" />
        <Handle className="-top-[8px] -right-[8px]" />
        <Handle className="top-[33px] -left-[8px]" />
        <Handle className="top-[33px] -right-[8px]" />
        <Handle className="-bottom-[8px] -left-[8px]" />
        <Handle className="-bottom-[8px] left-[489px]" />
        <Handle className="-right-[8px] -bottom-[8px]" />
        <div className="absolute -top-[33px] left-[496px] h-[33px] w-px bg-[#aaa]" />
        <svg className="absolute -top-[60px] left-[484px]" width="34" height="30" viewBox="0 0 34 30" fill="none">
          <circle cx="15" cy="15" r="12" stroke="#a8a8a8" strokeWidth="3" />
          <circle cx="15" cy="15" r="6" stroke="#a8a8a8" strokeWidth="3" />
          <path d="M24 9h9l-5 8z" fill="#a8a8a8" />
        </svg>
      </div>

      <div className="mt-[72px] ml-[73px] w-[988px] shrink-0 font-['Liberation_Serif','Noto_Sans_CJK_SC',serif] text-[18px] text-[#666]">
        <div className="flex h-[38px] border-t-2 border-b-2 border-t-[#555] border-b-[#999] bg-[#cfcfcf] font-['Noto_Sans_CJK_SC',sans-serif] text-[#777]">
          <div className="flex w-[308px] items-center justify-center border-r-2 border-[#666] pl-[4px] tracking-[1px]">方法名称</div>
          <div className="flex flex-1 items-center justify-center">描述</div>
        </div>
        {tableRows.map(([a, b]) => (
          <div key={a} className="flex h-[36px] border-b-2 border-[#a0a0a0]">
            <div className="flex w-[308px] items-center border-r-2 border-[#777] pl-[14px] font-semibold whitespace-nowrap">{a}</div>
            <div className="flex flex-1 items-center pl-[13px] font-['Noto_Sans_CJK_SC',sans-serif] text-[18.6px] whitespace-pre text-[#888]">
              <span>{b}</span>
            </div>
          </div>
        ))}
        <div className="flex h-[71px] border-b-2 border-[#a0a0a0]">
          <div className="w-[308px] border-r-2 border-[#777] pt-[1px] pl-[14px] leading-[34px] font-semibold">
            defineClass(String name,byte[] b,int
            <br />
            off,int len)
          </div>
          <div className="flex flex-1 items-center pl-[13px] font-['Noto_Sans_CJK_SC',sans-serif] text-[18.6px] whitespace-pre text-[#888]">
            <span>
              把字节数组 <Key>b</Key> 中的内容转换为一个 <Lat>Java</Lat> 类，返回结果为 <Lat>java.lang.Class</Lat> 类的实例
            </span>
          </div>
        </div>
        <div className="flex h-[37px] border-b-4 border-[#0a0a0a]">
          <div className="flex w-[308px] items-center border-r-2 border-[#777] pl-[14px] font-semibold">{"resolveClass(Class<?> c)"}</div>
          <div className="flex flex-1 items-center pl-[13px] font-['Noto_Sans_CJK_SC',sans-serif] text-[18.6px] whitespace-pre text-[#888]">
            <span>
              连接指定的一个 <Lat>Java</Lat> 类
            </span>
          </div>
        </div>
      </div>

      <div className="mt-[68px] self-end pr-[30px] text-[24px] leading-[32px] tracking-[1px] text-[#e8e8e8] italic">让天下没有难学的技术</div>

      <div className="absolute top-[178px] left-[820px] h-[64px] w-[64px] rounded-full bg-[#fff200]" />
      <svg className="absolute top-[213px] left-[853px]" width="20" height="32" viewBox="0 0 20 32">
        <path d="M1 0v24l6-5 5 12 4-2-5-11h8z" fill="#111" stroke="#fff" strokeWidth="0.6" />
      </svg>
    </div>
  );
}

function RightScroll() {
  return (
    <div className="mt-[3px] mr-[2px] flex h-[652px] w-[19px] shrink-0 flex-col">
      <div className="flex h-[606px] flex-col bg-[#dedede]">
        <ScrollBtn up />
        <div className="mt-[360px] h-[20px] w-[19px] border border-[#cfcfcf] bg-white" />
        <div className="mt-auto">
          <ScrollBtn />
        </div>
      </div>
      <div className="mt-[7px] flex justify-center">
        <svg width="11" height="13" viewBox="0 0 11 13">
          <path d="M5.5 0L10 5H1zM5.5 5L10 10H1zM0 12h11" fill="#777" stroke="#777" />
        </svg>
      </div>
      <div className="mt-[9px] flex justify-center">
        <svg width="11" height="13" viewBox="0 0 11 13">
          <path d="M5.5 13L10 8H1zM5.5 8L10 3H1zM0 1h11" fill="#777" stroke="#777" />
        </svg>
      </div>
    </div>
  );
}

function StatusBar() {
  return (
    <div className="relative flex h-[27px] shrink-0 items-center border-t border-[#d8d8d8] bg-[#f1f1f1] text-[15.5px] text-[#666]">
      <span className="ml-[11px] w-[189px] text-[16px] tracking-[0.6px] whitespace-nowrap">幻灯片 第 28 张 , 共 42 张</span>
      <span className="ml-[24px]">
        <Ico>
          <path d="M10 3H2v14h8M10 3v15" stroke="#666" />
          <path d="M12 7l5 6M17 7l-5 6" stroke="#666" />
        </Ico>
      </span>
      <span className="ml-[23px]">中文(中国)</span>
      <div className="flex-1" />
      <Ico w={16} h={20} vb="0 0 16 20">
        <path d="M8 2l3 4H5zM1 10h14M1 14h14M1 18h9" stroke="#666" />
      </Ico>
      <span className="ml-[4px]">备注</span>
      <span className="ml-[28px]">
        <Ico w={15} h={20} vb="0 0 15 20">
          <path d="M0 2h15v12H9l-3 5v-5H0z" fill="#707070" />
        </Ico>
      </span>
      <span className="ml-[6px]">批注</span>
      <div className="ml-[26px] flex h-[26px] w-[50px] items-center justify-center bg-[#c8c8c8]">
        <Ico>
          <path d="M2 1h16v18H2zM6 1v12h12M2 13h16M9 4h6v6H9z" stroke="#666" />
        </Ico>
      </div>
      <div className="flex w-[49px] justify-center">
        <Ico>
          <path d="M2 3h6v5H2zM12 3h6v5h-6zM2 12h6v5H2zM12 12h6v5h-6z" stroke="#666" />
        </Ico>
      </div>
      <div className="flex w-[50px] justify-center">
        <Ico>
          <path d="M3 2h14v16H3zM10 2v16M5 6h3M5 10h3M5 14h3M12 6h3M12 10h3M12 14h3" stroke="#666" />
        </Ico>
      </div>
      <div className="flex w-[49px] justify-center">
        <Ico>
          <path d="M2 2h16M4 3h12v9H4zM10 12v6M6 18h8" stroke="#666" strokeWidth="1.3" />
        </Ico>
      </div>
      <div className="ml-[8px] h-[2px] w-[7px] bg-[#666]" />
      <div className="relative ml-[6px] h-px w-[130px] bg-[#aaa]">
        <div className="absolute -top-[7px] left-[58px] h-[15px] w-[5px] bg-[#666]" />
        <div className="absolute -top-[2px] left-[65px] h-[5px] w-px bg-[#999]" />
      </div>
      <div className="relative ml-[6px] h-[10px] w-[10px]">
        <div className="absolute top-[4px] left-0 h-[2px] w-[10px] bg-[#666]" />
        <div className="absolute top-0 left-[4px] h-[10px] w-[2px] bg-[#666]" />
      </div>
      <span className="ml-[21px] w-[33px] font-['Liberation_Sans',sans-serif]">91%</span>
      <div className="mr-[9px] ml-[19px]">
        <Ico w={16} h={20} vb="0 0 16 20">
          <path d="M1 1h14v18H1zM3 4l3 3M3 4h2M3 4v2M13 4l-3 3M13 4h-2M13 4v2M3 16l3-3M3 16h2M3 16v-2M13 16l-3-3M13 16h-2M13 16v-2" stroke="#666" />
        </Ico>
      </div>
      <div className="absolute bottom-0 left-[19px] h-[3px] w-[34px] rounded-t-full border-t border-[#4a8fc0]" />
    </div>
  );
}

export default function App() {
  return (
    <div className={`flex h-[1120px] w-[1792px] flex-col overflow-hidden bg-black blur-[0.5px] ${cjk}`}>
      <div className="h-[78px] shrink-0" />
      <TitleBar />
      <Ribbon />
      <div className="flex h-[738px] shrink-0 bg-[#e6e6e6]">
        <ThumbPane />
        <div className="flex min-w-0 flex-1 flex-col">
          <div className="flex h-[682px] shrink-0">
            <div className="flex-1 pt-[18px]">
              <Slide />
            </div>
            <RightScroll />
          </div>
          <div className="ml-[3px] flex h-[56px] items-center border-t-2 border-[#d4d4d4] pb-[14px] pl-[13px] text-[19px] text-[#666]">单击此处添加备注</div>
        </div>
      </div>
      <StatusBar />
    </div>
  );
}
